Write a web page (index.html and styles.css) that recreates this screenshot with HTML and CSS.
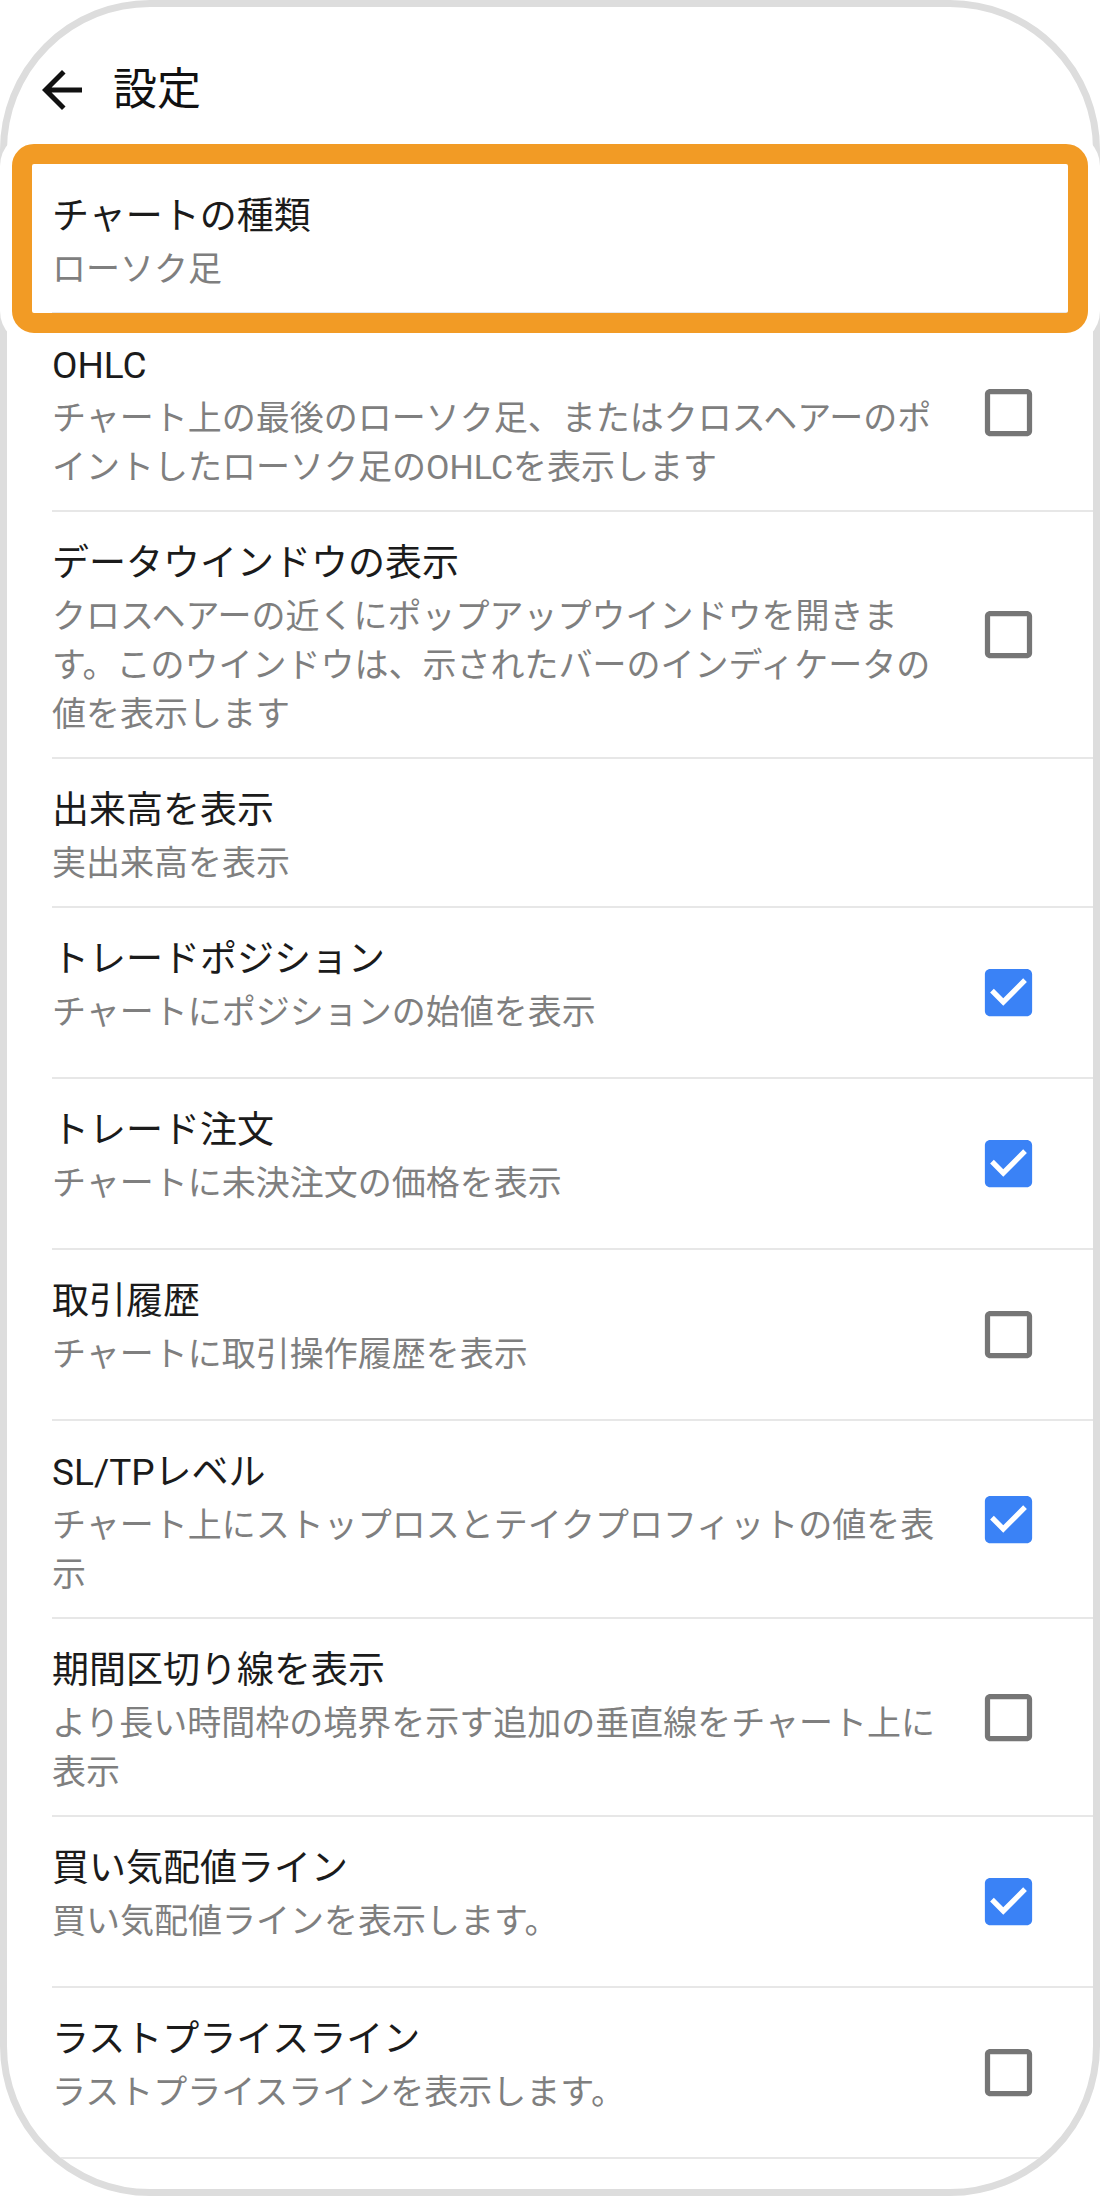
FILE: index.html
```html
<!DOCTYPE html>
<html lang="ja">
<head>
    <meta charset="UTF-8">
    <meta name="viewport" content="width=device-width, initial-scale=1.0">
    <title>設定</title>
    <link rel="stylesheet" href="styles.css">
</head>
<body>
    <div class="device">
        <div class="phone">
            <div class="appbar">
                <svg class="back" viewBox="0 0 24 24"><path d="M20 11H7.83l5.59-5.59L12 4l-8 8 8 8 1.41-1.41L7.83 13H20v-2z"/></svg>
                <h1>設定</h1>
            </div>

            <div class="list">
                <div class="row">
                    <div class="text">
                        <div class="title">チャートの種類</div>
                        <div class="desc">ローソク足</div>
                    </div>
                </div>

                <div class="row">
                    <div class="text">
                        <div class="title">OHLC</div>
                        <div class="desc">チャート上の最後のローソク足、またはクロスヘアーのポイントしたローソク足のOHLCを表示します</div>
                    </div>
                    <svg class="check" viewBox="0 0 24 24"><path d="M19 5v14H5V5h14m0-2H5c-1.1 0-2 .9-2 2v14c0 1.1.9 2 2 2h14c1.1 0 2-.9 2-2V5c0-1.1-.9-2-2-2z"/></svg>
                </div>

                <div class="row">
                    <div class="text">
                        <div class="title">データウインドウの表示</div>
                        <div class="desc">クロスヘアーの近くにポップアップウインドウを開きます。このウインドウは、示されたバーのインディケータの値を表示します</div>
                    </div>
                    <svg class="check" viewBox="0 0 24 24"><path d="M19 5v14H5V5h14m0-2H5c-1.1 0-2 .9-2 2v14c0 1.1.9 2 2 2h14c1.1 0 2-.9 2-2V5c0-1.1-.9-2-2-2z"/></svg>
                </div>

                <div class="row">
                    <div class="text">
                        <div class="title">出来高を表示</div>
                        <div class="desc">実出来高を表示</div>
                    </div>
                </div>

                <div class="row">
                    <div class="text">
                        <div class="title">トレードポジション</div>
                        <div class="desc">チャートにポジションの始値を表示</div>
                    </div>
                    <svg class="check on" viewBox="0 0 24 24"><path d="M19 3H5c-1.11 0-2 .9-2 2v14c0 1.1.89 2 2 2h14c1.11 0 2-.9 2-2V5c0-1.1-.89-2-2-2zm-9 14l-5-5 1.41-1.41L10 14.17l7.59-7.59L19 8l-9 9z"/></svg>
                </div>

                <div class="row">
                    <div class="text">
                        <div class="title">トレード注文</div>
                        <div class="desc">チャートに未決注文の価格を表示</div>
                    </div>
                    <svg class="check on" viewBox="0 0 24 24"><path d="M19 3H5c-1.11 0-2 .9-2 2v14c0 1.1.89 2 2 2h14c1.11 0 2-.9 2-2V5c0-1.1-.89-2-2-2zm-9 14l-5-5 1.41-1.41L10 14.17l7.59-7.59L19 8l-9 9z"/></svg>
                </div>

                <div class="row">
                    <div class="text">
                        <div class="title">取引履歴</div>
                        <div class="desc">チャートに取引操作履歴を表示</div>
                    </div>
                    <svg class="check" viewBox="0 0 24 24"><path d="M19 5v14H5V5h14m0-2H5c-1.1 0-2 .9-2 2v14c0 1.1.9 2 2 2h14c1.1 0 2-.9 2-2V5c0-1.1-.9-2-2-2z"/></svg>
                </div>

                <div class="row">
                    <div class="text">
                        <div class="title">SL/TPレベル</div>
                        <div class="desc">チャート上にストップロスとテイクプロフィットの値を表示</div>
                    </div>
                    <svg class="check on" viewBox="0 0 24 24"><path d="M19 3H5c-1.11 0-2 .9-2 2v14c0 1.1.89 2 2 2h14c1.11 0 2-.9 2-2V5c0-1.1-.89-2-2-2zm-9 14l-5-5 1.41-1.41L10 14.17l7.59-7.59L19 8l-9 9z"/></svg>
                </div>

                <div class="row">
                    <div class="text">
                        <div class="title">期間区切り線を表示</div>
                        <div class="desc">より長い時間枠の境界を示す追加の垂直線をチャート上に表示</div>
                    </div>
                    <svg class="check" viewBox="0 0 24 24"><path d="M19 5v14H5V5h14m0-2H5c-1.1 0-2 .9-2 2v14c0 1.1.9 2 2 2h14c1.1 0 2-.9 2-2V5c0-1.1-.9-2-2-2z"/></svg>
                </div>

                <div class="row">
                    <div class="text">
                        <div class="title">買い気配値ライン</div>
                        <div class="desc">買い気配値ラインを表示します。</div>
                    </div>
                    <svg class="check on" viewBox="0 0 24 24"><path d="M19 3H5c-1.11 0-2 .9-2 2v14c0 1.1.89 2 2 2h14c1.11 0 2-.9 2-2V5c0-1.1-.89-2-2-2zm-9 14l-5-5 1.41-1.41L10 14.17l7.59-7.59L19 8l-9 9z"/></svg>
                </div>

                <div class="row">
                    <div class="text">
                        <div class="title">ラストプライスライン</div>
                        <div class="desc">ラストプライスラインを表示します。</div>
                    </div>
                    <svg class="check" viewBox="0 0 24 24"><path d="M19 5v14H5V5h14m0-2H5c-1.1 0-2 .9-2 2v14c0 1.1.9 2 2 2h14c1.1 0 2-.9 2-2V5c0-1.1-.9-2-2-2z"/></svg>
                </div>
            </div>
        </div>

        <!-- annotation frame over the first setting -->
        <div class="highlight"></div>
    </div>
</body>
</html>
```

FILE: styles.css
```css
body { margin: 0; background: #fff; font-family: Roboto, "Noto Sans CJK JP", sans-serif; }
.device { position: relative; width: 1100px; height: 2196px; }
.phone { box-sizing: border-box; height: 100%; border: 7px solid #dddddd; border-radius: 150px; overflow: hidden; background: #fff; }

.appbar { display: flex; align-items: center; gap: 21px; padding: 53px 25px 45px; }
.back { width: 60px; height: 60px; fill: #111; flex: none; }
.appbar h1 { margin: 0; font-size: 44px; line-height: 60px; font-weight: 400; color: #111; }

.list { margin-left: 45px; }
.row { display: flex; align-items: center; border-bottom: 2px solid #e7e7e7; padding-right: 53px; }
.text { flex: 1; align-self: flex-start; padding: 24px 0 18px; margin-right: 30px; }
.title { font-size: 37px; line-height: 56px; color: #1b1b1b; }
.desc { font-size: 34px; line-height: 49px; color: #7f7f7f; }

.check { width: 63px; height: 63px; margin: 53px 0; flex: none; fill: #767676; }
.check.on { fill: #3a82f6; }

.highlight { position: absolute; left: 12px; top: 144px; width: 1076px; height: 189px; box-sizing: border-box; border: 20px solid #f29b25; border-radius: 22px; box-shadow: 0 0 0 12px #fff; }
```
